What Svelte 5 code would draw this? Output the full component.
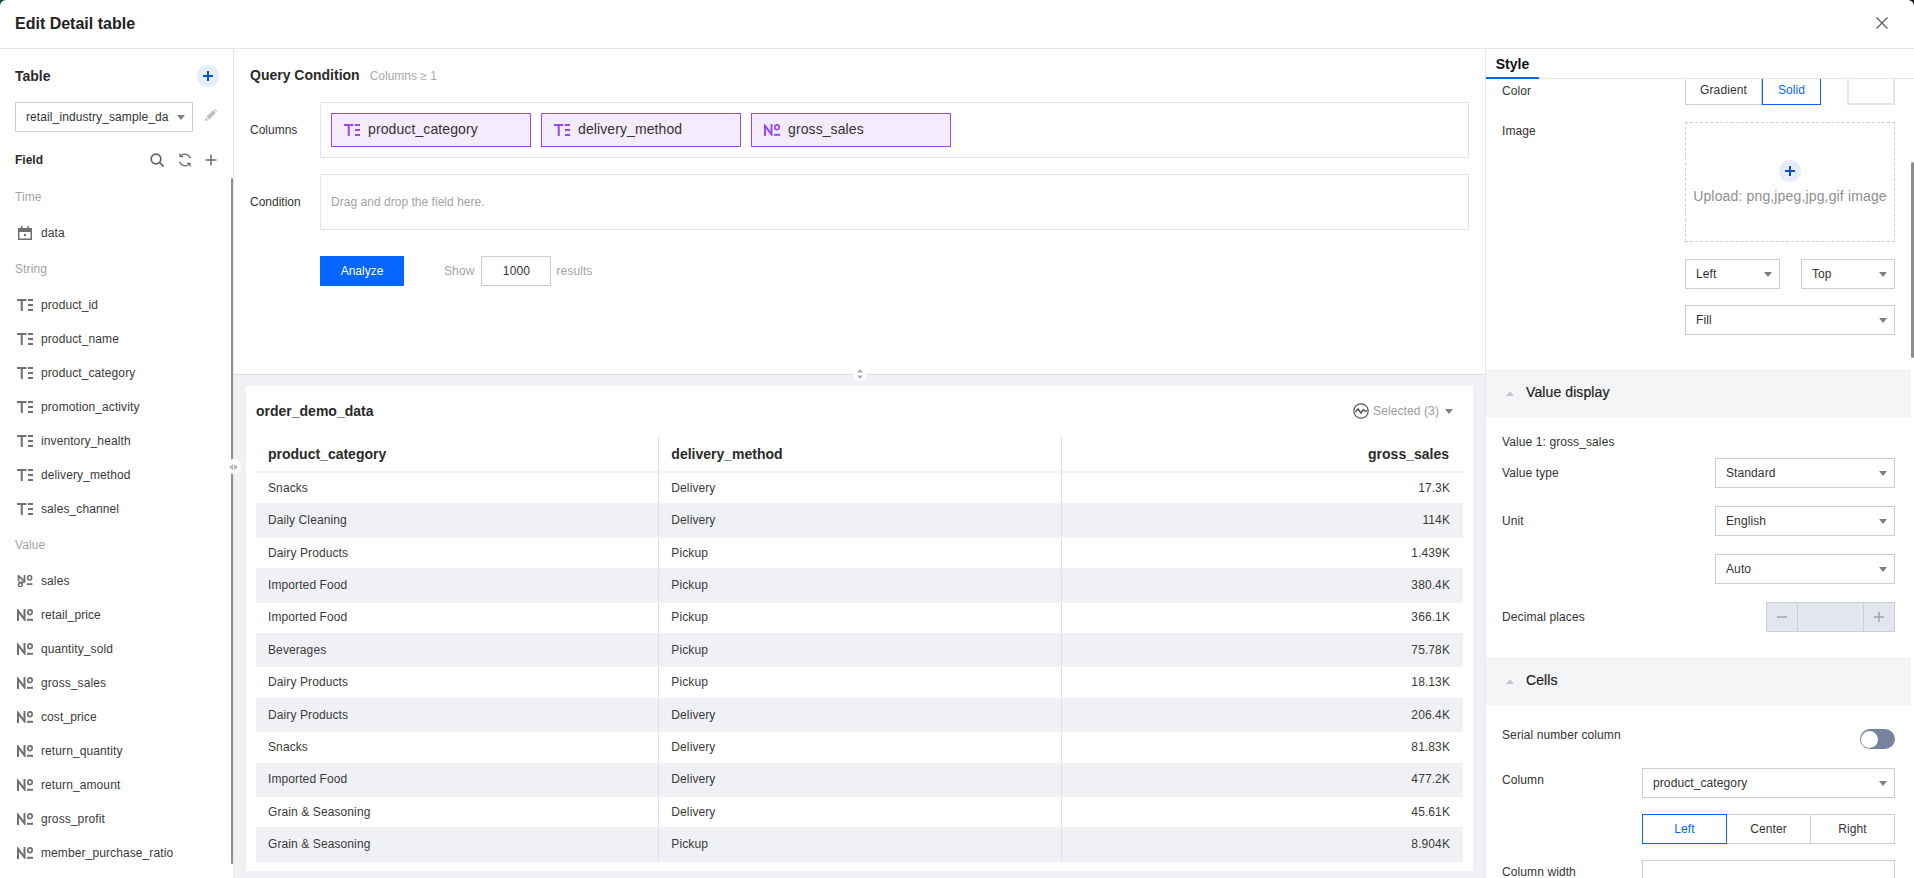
<script>
  const strings = ['product_id','product_name','product_category','promotion_activity','inventory_health','delivery_method','sales_channel'];
  const values = ['retail_price','quantity_sold','gross_sales','cost_price','return_quantity','return_amount','gross_profit','member_purchase_ratio'];
  const rows = [
    ['Snacks','Delivery','17.3K'],['Daily Cleaning','Delivery','114K'],['Dairy Products','Pickup','1.439K'],
    ['Imported Food','Pickup','380.4K'],['Imported Food','Pickup','366.1K'],['Beverages','Pickup','75.78K'],
    ['Dairy Products','Pickup','18.13K'],['Dairy Products','Delivery','206.4K'],['Snacks','Delivery','81.83K'],
    ['Imported Food','Delivery','477.2K'],['Grain & Seasoning','Delivery','45.61K'],['Grain & Seasoning','Pickup','8.904K']
  ];
</script>

{#snippet textIcon()}
  <svg class="ficon" viewBox="0 0 16 12" fill="none" stroke="currentColor" stroke-width="2">
    <path d="M0 1h9.500M4.750 1v11M11 1h5M11 6h5M11 11h5" />
  </svg>
{/snippet}

{#snippet numIcon()}
  <svg class="ficon" viewBox="0 0 16 12" fill="none" stroke="currentColor" stroke-width="2">
    <path d="M1 12V1.800l6.500 8.600V0" />
    <ellipse cx="13" cy="3.200" rx="2.200" ry="2.400" stroke-width="1.700" />
    <path d="M10 10.800h6" />
  </svg>
{/snippet}

{#snippet salesIcon()}
  <svg class="ficon" viewBox="0 0 16 13" fill="none" stroke="currentColor" stroke-width="1.800">
    <path d="M1 6.500V1l6.500 6V0" />
    <ellipse cx="13" cy="3" rx="2.200" ry="2.400" stroke-width="1.700" />
    <circle cx="3" cy="10.700" r="2" stroke-width="1.600" />
    <path d="M1 8h6.500M10 9.800h6" />
  </svg>
{/snippet}

{#snippet caret()}
  <svg class="caret" viewBox="0 0 8 5"><path d="M0 0h8L4 5z" /></svg>
{/snippet}

{#snippet select(label, cls)}
  <div class="select {cls}"><span>{label}</span>{@render caret()}</div>
{/snippet}

{#snippet plusBadge()}
  <span class="badge">
    <svg viewBox="0 0 12 12" width="12" height="12" fill="none" stroke="#0a4fd6" stroke-width="2"><path d="M6 1v10M1 6h10" /></svg>
  </span>
{/snippet}

<div class="dialog">
  <header class="top">
    <h1>Edit Detail table</h1>
    <svg class="close" viewBox="0 0 12 12" fill="none" stroke="#555" stroke-width="1.100"><path d="M.5.5l11 11M11.500.5l-11 11" /></svg>
  </header>

  <div class="body">
    <aside class="left">
      <div class="tablehead"><b>Table</b>{@render plusBadge()}</div>
      <div class="tablepick">
        <div class="select datasel"><span class="clip">retail_industry_sample_data</span>{@render caret()}</div>
        <svg class="pencil" viewBox="0 0 12 12" fill="#bdbdbd"><path d="M0 12l.8-3.400 2.600 2.600zM1.500 7.800L8 1.300l2.700 2.700-6.500 6.500zM8.800.6l1-.6 2.200 2.200-.7 1z" /></svg>
      </div>
      <div class="fieldhead">
        <b>Field</b>
        <div class="tools">
          <svg viewBox="0 0 14 14" fill="none" stroke="#5f5f5f" stroke-width="1.700"><circle cx="6" cy="6" r="4.800" /><path d="M9.500 9.500L13.500 13.500" /></svg>
          <svg viewBox="0 0 14 14" fill="none" stroke="#6a6a6a" stroke-width="1.300"><path d="M12.500 5.200A6 6 0 0 0 2.700 2.900M1.500 8.800a6 6 0 0 0 9.800 2.300" /><path d="M2 .6v3h3M12 13.400v-3H9" /></svg>
          <svg class="plus" viewBox="0 0 12 12" fill="none" stroke="#6a6a6a" stroke-width="1.500"><path d="M6 .5v11M.5 6h11" /></svg>
        </div>
      </div>

      <div class="group">Time</div>
      <div class="field">
        <svg class="cal" viewBox="0 0 14 14" fill="#6f6f6f"><path d="M0 2h3V0h1.500v2h5V0H11v2h3v12H0zm1.500 4v6.500h11V6z" /><rect x="6" y="8" width="2" height="2" /></svg>
        <span>data</span>
      </div>

      <div class="group">String</div>
      {#each strings as s}
        <div class="field">{@render textIcon()}<span>{s}</span></div>
      {/each}

      <div class="group">Value</div>
      <div class="field">{@render salesIcon()}<span>sales</span></div>
      {#each values as s}
        <div class="field">{@render numIcon()}<span>{s}</span></div>
      {/each}
      <div class="thumb"></div>
      <div class="handle"><i class="l"></i><i class="r"></i></div>
    </aside>

    <main class="center">
      <section class="query">
        <div class="qhead"><b>Query Condition</b><span>Columns ≥ 1</span></div>
        <div class="qrow">
          <span class="qlabel">Columns</span>
          <div class="drop">
            <div class="chip">{@render textIcon()}<span>product_category</span></div>
            <div class="chip">{@render textIcon()}<span>delivery_method</span></div>
            <div class="chip">{@render numIcon()}<span>gross_sales</span></div>
          </div>
        </div>
        <div class="qrow">
          <span class="qlabel">Condition</span>
          <div class="drop"><span class="hint">Drag and drop the field here.</span></div>
        </div>
        <div class="actions">
          <button class="primary">Analyze</button>
          <span class="muted show">Show</span>
          <div class="count">1000</div>
          <span class="muted">results</span>
        </div>
        <div class="vhandle">
          <svg viewBox="0 0 8 10" width="8" height="10" fill="#a9adb5"><path d="M4 0l3 3.500H1zM4 10L1 6.500h6z" /></svg>
        </div>
      </section>

      <section class="result">
        <div class="card">
          <div class="cardhead">
            <b>order_demo_data</b>
            <div class="picked">
              <svg viewBox="0 0 16 16" width="16" height="16" fill="none" stroke="#555" stroke-width="1.200"><circle cx="8" cy="8" r="7.200" /><path d="M2.500 9l2.500-3 3 4 2.500-3.500 1.500 1.500h2" stroke-width="1.400" /></svg>
              <span>Selected (3)</span>
              {@render caret()}
            </div>
          </div>
          <div class="table">
            <div class="tr th">
              <div>product_category</div><div>delivery_method</div><div class="num">gross_sales</div>
            </div>
            {#each rows as r}
              <div class="tr">
                <div>{r[0]}</div><div>{r[1]}</div><div class="num">{r[2]}</div>
              </div>
            {/each}
          </div>
        </div>
      </section>
    </main>

    <aside class="right">
      <div class="tabs"><div class="tab">Style</div></div>
      <div class="scroll">
        <div class="pane">
          <div class="prow colorrow">
            <span class="lab">Color</span>
            <div class="ctrls">
              <div class="seg grad"><div class="opt">Gradient</div><div class="opt on">Solid</div></div>
              <div class="swatch"></div>
            </div>
          </div>
          <div class="prow imgrow">
            <span class="lab">Image</span>
            <div class="upload">
              {@render plusBadge()}
              <span>Upload: png,jpeg,jpg,gif image</span>
            </div>
          </div>
          <div class="pair">
            {@render select('Left', 'half')}
            {@render select('Top', 'half')}
          </div>
          <div class="fillrow">{@render select('Fill', 'fillsel')}</div>

          <div class="sect first"><svg class="up" viewBox="0 0 8 5"><path d="M4 0l4 5H0z" /></svg><span>Value display</span></div>
          <div class="vtitle">Value 1: gross_sales</div>
          <div class="vrow"><span class="lab">Value type</span>{@render select('Standard', 'w180')}</div>
          <div class="vrow"><span class="lab">Unit</span>{@render select('English', 'w180')}</div>
          <div class="vrow"><span class="lab"></span>{@render select('Auto', 'w180')}</div>
          <div class="vrow">
            <span class="lab">Decimal places</span>
            <div class="stepper">
              <div><svg viewBox="0 0 10 10" width="10" height="10" stroke="#9ea4b0" stroke-width="1.500"><path d="M0 5h10" /></svg></div>
              <div class="mid"></div>
              <div><svg viewBox="0 0 10 10" width="10" height="10" stroke="#9ea4b0" stroke-width="1.500"><path d="M0 5h10M5 0v10" /></svg></div>
            </div>
          </div>

          <div class="sect"><svg class="up" viewBox="0 0 8 5"><path d="M4 0l4 5H0z" /></svg><span>Cells</span></div>
          <div class="serial"><span class="lab">Serial number column</span><div class="toggle"><i></i></div></div>
          <div class="vrow colrow"><span class="lab">Column</span>{@render select('product_category', 'w253')}</div>
          <div class="align"><div class="seg tri"><div class="opt on">Left</div><div class="opt">Center</div><div class="opt">Right</div></div></div>
          <div class="vrow colrow"><span class="lab">Column width</span><div class="select w253"></div></div>
        </div>
        <div class="rthumb"></div>
      </div>
    </aside>
  </div>
</div>

<style>
  :global(body) {
    margin: 0;
    background: linear-gradient(90deg, #0b4d22 50%, #0c0c0c 50%);
    overflow: hidden;
  }
  .dialog {
    width: 1914px;
    height: 878px;
    background: #fff;
    border-radius: 6px 6px 0 0;
    overflow: hidden;
    display: flex;
    flex-direction: column;
    font: 12px/1.4 "Liberation Sans", Arial, sans-serif;
    letter-spacing: 0.1px;
    color: #333;
  }
  b { font-weight: 700; color: #2a2a2a; letter-spacing: 0; }
  .top {
    height: 48px;
    flex: none;
    border-bottom: 1px solid #e5e8ef;
    display: flex;
    align-items: center;
    justify-content: space-between;
    padding: 0 26px 0 15px;
  }
  h1 { margin: 0; font-size: 16px; font-weight: 700; color: #222; letter-spacing: 0; }
  .close { width: 12px; height: 12px; margin-top: -2px; }
  .body { flex: 1; display: flex; min-height: 0; }

  /* left */
  .left {
    width: 234px;
    flex: none;
    box-sizing: border-box;
    border-right: 1px solid #e5e8ef;
    padding: 0 15px;
    position: relative;
  }
  .tablehead {
    display: flex; justify-content: space-between; align-items: center;
    height: 22px; margin: 16px -1px 0 0; font-size: 14px;
  }
  .tablehead b { padding-top: 1px; }
  .badge {
    width: 22px; height: 22px; border-radius: 50%; background: #e6ecfa;
    display: flex; align-items: center; justify-content: center;
  }
  .tablepick { display: flex; align-items: center; gap: 12px; margin-top: 15px; }
  .select {
    display: flex; align-items: center; justify-content: space-between;
    box-sizing: border-box; height: 30px; border: 1px solid #c9cfdc;
    padding: 0 7px 0 10px; color: #333; background: #fff;
  }
  .datasel { width: 178px; }
  .clip { display: block; width: 143px; overflow: hidden; white-space: nowrap; }
  .caret { width: 8px; height: 5px; flex: none; fill: #7f7f7f; }
  .pencil { width: 12px; height: 12px; margin-top: -5px; }
  .fieldhead {
    display: flex; justify-content: space-between; align-items: center;
    height: 20px; margin-top: 18px; padding-right: 1px;
  }
  .tools { display: flex; gap: 14px; align-items: center; }
  .tools svg { width: 14px; height: 14px; }
  .tools .plus { width: 12px; height: 12px; margin-left: -1px; }
  .group { height: 36px; line-height: 36px; color: #a3a3a3; font-size: 12px; }
  .fieldhead + .group { margin-top: 9px; height: 37px; }
  .field { height: 34px; display: flex; align-items: center; gap: 8px; padding-left: 2px; color: #3a3a3a; }
  .field + .group { height: 38px; line-height: 38px; }
  .ficon { width: 16px; height: 12px; flex: none; color: #6f6f6f; }
  .cal { width: 14px; height: 14px; flex: none; margin: 0 1px; }
  .thumb {
    position: absolute; right: 0; top: 129px; width: 2.5px; height: 686px;
    background: #8f8f8f; border-radius: 2px;
  }
  .handle {
    position: absolute; left: 226px; top: 410px; width: 15px; height: 15px;
    background: #fff; border-radius: 50%; z-index: 3;
    display: flex; align-items: center; justify-content: center; gap: 1px;
  }
  .handle i { width: 0; height: 0; border: 3px solid transparent; }
  .handle .l { border-left-width: 0; border-right: 4px solid #b3b6bd; }
  .handle .r { border-right-width: 0; border-left: 4px solid #b3b6bd; }

  /* center */
  .center { flex: 1; min-width: 0; display: flex; flex-direction: column; background: #f0f1f5; }
  .query {
    height: 326px; flex: none; box-sizing: border-box; background: #fff;
    border-bottom: 1px solid #dcdee3; padding: 16px 16px 0; position: relative;
  }
  .qhead { display: flex; align-items: center; gap: 10px; height: 22px; font-size: 14px; }
  .qhead span { font-size: 12px; color: #a8a8a8; letter-spacing: 0; }
  .qrow { display: flex; margin-top: 16px; height: 56px; align-items: stretch; }
  .qhead + .qrow { margin-top: 15px; }
  .qlabel { width: 70px; flex: none; align-self: center; color: #333; letter-spacing: 0; }
  .drop {
    flex: 1; box-sizing: border-box; border: 1px solid #e3e5ea; display: flex;
    align-items: center; gap: 10px; padding: 0 10px;
  }
  .hint { color: #a3a3a3; letter-spacing: 0.03px; }
  .chip {
    width: 200px; height: 34px; box-sizing: border-box; border: 1px solid #9a48f0;
    background: #f4ebfd; display: flex; align-items: center; gap: 8px;
    padding-left: 12px; font-size: 14px; letter-spacing: 0.1px; color: #333;
  }
  .chip .ficon { color: #9a48f0; }
  .actions { display: flex; align-items: center; margin: 26px 0 0 70px; height: 30px; }
  .primary {
    width: 84px; height: 30px; border: 0; background: #0665ff; color: #fff;
    font: inherit; padding: 0;
  }
  .muted { color: #a3a3a3; }
  .show { margin-left: 40px; margin-right: 7px; }
  .count {
    width: 70px; height: 30px; box-sizing: border-box; border: 1px solid #c9cfdc;
    display: flex; align-items: center; justify-content: center; color: #333; margin-right: 5px;
  }
  .vhandle {
    position: absolute; left: 50%; bottom: -7px; width: 14px; height: 14px; margin-left: -7px;
    background: #fff; border-radius: 50%;
    display: flex; align-items: center; justify-content: center; z-index: 2;
  }
  .result { flex: 1; min-height: 0; padding: 11px 12px 7px 12px; display: flex; }
  .card { flex: 1; background: #fff; padding: 0 10px; box-sizing: border-box; }
  .cardhead {
    height: 51px; display: flex; align-items: center; justify-content: space-between;
    font-size: 14px; padding-right: 10px;
  }
  .picked { display: flex; align-items: center; gap: 4px; font-size: 12px; color: #9b9b9b; }
  .picked .caret { margin-left: 2px; }
  .tr {
    display: grid; grid-template-columns: repeat(3, 1fr); height: 32.4px;
    box-sizing: border-box; border-bottom: 2px solid #f0f1f5;
  }
  .tr:nth-child(odd):not(.th) { background: #f0f1f5; }
  .tr > div {
    padding: 0 12px; display: flex; align-items: center; color: #3a3a3a;
    border-left: 1px solid #dcdee3;
  }
  .tr > div:first-child { border-left: 0; }
  .num { justify-content: flex-end; padding-right: 13px !important; }
  .th { height: 36px; font-size: 14px; }
  .th > div { font-weight: 700; color: #2a2a2a; letter-spacing: 0; padding-top: 1px; }
  .th .num { padding-right: 14px !important; }

  /* right */
  .right {
    width: 429px; flex: none; box-sizing: border-box; border-left: 1px solid #e5e8ef;
    display: flex; flex-direction: column; min-height: 0;
  }
  .tabs { height: 30px; flex: none; box-sizing: border-box; border-bottom: 1px solid #e5e8ef; }
  .tab {
    width: 53px; height: 30px; box-sizing: border-box; border-bottom: 2px solid #0665ff;
    font-size: 14px; font-weight: 700; color: #111; text-align: center; line-height: 30px; letter-spacing: 0;
  }
  .scroll { flex: 1; min-height: 0; overflow: hidden; position: relative; }
  .pane { margin-top: -20px; padding-right: 3px; }
  .prow { display: flex; justify-content: space-between; padding: 0 16px; }
  .lab { color: #333; }
  .colorrow { height: 46px; align-items: flex-end; }
  .colorrow .lab { margin-bottom: 5px; }
  .ctrls { display: flex; gap: 26px; align-self: stretch; }
  .seg { display: flex; box-sizing: border-box; }
  .opt {
    box-sizing: border-box; display: flex; align-items: center; justify-content: center;
    border: 1px solid #c9cfdc; border-left-width: 0; color: #333; height: 100%;
  }
  .opt:first-child { border-left-width: 1px; }
  .opt.on { border: 1px solid #0665ff; color: #0665ff; }
  .grad { width: 136px; height: 30px; align-self: flex-end; }
  .grad .opt:first-child { width: 77px; }
  .grad .opt.on { width: 59px; }
  .swatch { width: 48px; height: 30px; box-sizing: border-box; border: 2px solid #e5e7ec; align-self: flex-end; }
  .imgrow { margin-top: 17px; height: 120px; }
  .imgrow .lab { margin-top: 1px; }
  .upload {
    width: 210px; height: 120px; box-sizing: border-box; border: 1px dashed #c9cfdc;
    display: flex; flex-direction: column; align-items: center; justify-content: center;
    gap: 5px; font-size: 14px; letter-spacing: 0.15px; color: #8f8f8f; white-space: nowrap; padding-top: 2px;
  }
  .pair { display: flex; justify-content: flex-end; gap: 21px; padding-right: 16px; margin-top: 17px; }
  .half { width: 95px; }
  .half:last-child { width: 94px; }
  .fillrow { display: flex; justify-content: flex-end; padding-right: 16px; margin-top: 16px; }
  .fillsel { width: 210px; }
  .sect {
    height: 48px; background: #f4f5f7; display: flex; align-items: center; gap: 12px;
    padding-left: 20px; font-size: 14px; color: #222; margin-top: 25px; -webkit-text-stroke: 0.2px #222;
  }
  .sect.first { margin-top: 34px; }
  .up { width: 8px; height: 5px; fill: #c1c4ca; }
  .vtitle { margin: 17px 16px 0; height: 17px; line-height: 17px; color: #333; }
  .vrow {
    display: flex; justify-content: space-between; align-items: center;
    padding: 0 16px; margin-top: 18px;
  }
  .vtitle + .vrow { margin-top: 7px; }
  .w180 { width: 180px; }
  .w253 { width: 253px; }
  .stepper {
    width: 129px; height: 30px; box-sizing: border-box; border: 1px solid #c9cfdc;
    background: #e3e6ed; display: flex;
  }
  .stepper > div { width: 30px; display: flex; align-items: center; justify-content: center; }
  .stepper .mid { flex: 1; border-left: 1px solid #c9cfdc; border-right: 1px solid #c9cfdc; }
  .serial { display: flex; justify-content: space-between; padding: 0 16px; margin-top: 22px; height: 25px; }
  .toggle {
    width: 35px; height: 20px; border-radius: 10px; background: #76839c;
    display: flex; align-items: center; padding-left: 1px; box-sizing: border-box; margin-top: 2px;
  }
  .toggle i { width: 17px; height: 17px; border-radius: 50%; background: #fff; display: block; }
  .colrow { align-items: flex-start; margin-top: 16px; }
  .colrow .lab { margin-top: 4px; }
  .align { display: flex; justify-content: flex-end; padding-right: 16px; margin-top: 16px; }
  .tri { width: 253px; height: 30px; }
  .tri .opt { flex: 1; }
  .rthumb {
    position: absolute; right: 0; top: 83px; width: 3px; height: 196px;
    background: #8f8f8f; border-radius: 2px;
  }
</style>
